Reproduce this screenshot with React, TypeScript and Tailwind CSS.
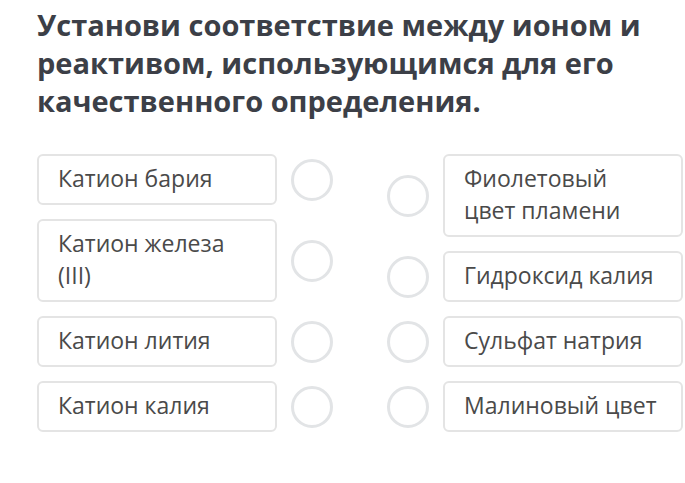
import React from "react";

const Circle = () => (
  <div className="w-[42px] h-[42px] shrink-0 rounded-full border-[3px] border-[#e2e4e6] bg-white" />
);

const Card = ({ children }: { children: React.ReactNode }) => (
  <div className="w-[240px] shrink-0 rounded-[6px] border-2 border-[#e4e4e4] bg-white px-[19px] pt-[6px] pb-[9px] text-[23px] leading-[32px] text-[#4a4a4a]">
    {children}
  </div>
);

export default function App() {
  const left = ["Катион бария", <>Катион железа<br />(III)</>, "Катион лития", "Катион калия"];
  const right = [<>Фиолетовый<br />цвет пламени</>, "Гидроксид калия", "Сульфат натрия", "Малиновый цвет"];
  return (
    <div
      className="w-[685px] h-[483px] bg-white overflow-hidden pl-[37px] pt-[6px]"
      style={{ fontFamily: '"Open Sans", "Noto Sans", sans-serif' }}
    >
      <h1 className="text-[29px] leading-[38px] font-bold text-[#3c3f47] pr-[20px]">
        Установи соответствие между ионом и реактивом, использующимся для его качественного определения.
      </h1>
      <div className="mt-[34px] flex gap-[54px]">
        <div className="flex flex-col gap-[14px]">
          {left.map((t, i) => (
            <div key={i} className="flex items-center gap-[14px]">
              <Card>{t}</Card>
              <Circle />
            </div>
          ))}
        </div>
        <div className="flex flex-col gap-[14px]">
          {right.map((t, i) => (
            <div key={i} className="flex items-center gap-[14px]">
              <Circle />
              <Card>{t}</Card>
            </div>
          ))}
        </div>
      </div>
    </div>
  );
}
